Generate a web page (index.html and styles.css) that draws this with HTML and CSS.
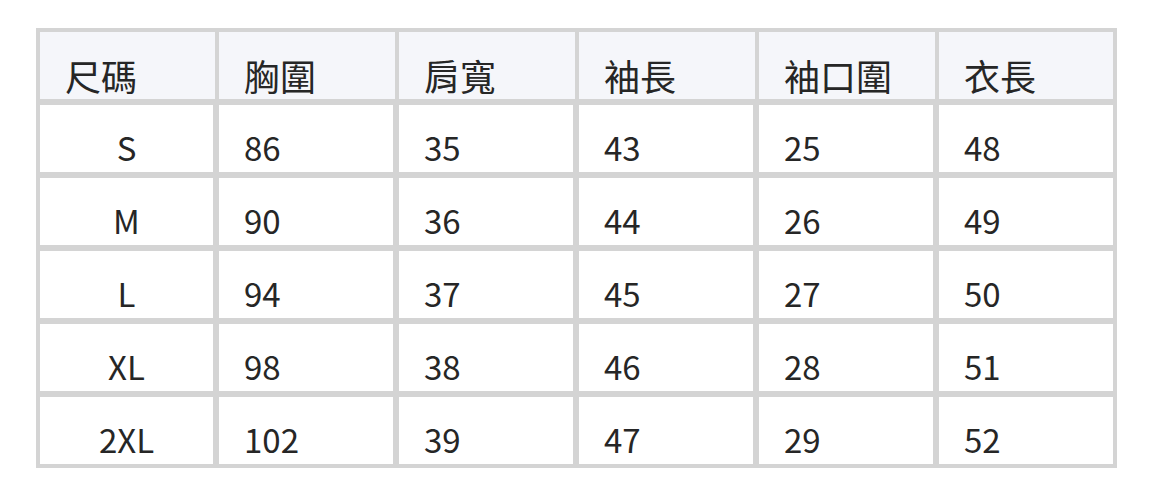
FILE: index.html
```html
<!DOCTYPE html>
<html lang="zh-Hant">
<head>
<meta charset="utf-8">
<link rel="stylesheet" href="styles.css">
</head>
<body>
<table class="size-table">
  <thead>
    <tr><th>尺碼</th><th>胸圍</th><th>肩寬</th><th>袖長</th><th>袖口圍</th><th>衣長</th></tr>
  </thead>
  <tbody>
    <tr><td class="size">S</td><td>86</td><td>35</td><td>43</td><td>25</td><td>48</td></tr>
    <tr><td class="size">M</td><td>90</td><td>36</td><td>44</td><td>26</td><td>49</td></tr>
    <tr><td class="size">L</td><td>94</td><td>37</td><td>45</td><td>27</td><td>50</td></tr>
    <tr><td class="size">XL</td><td>98</td><td>38</td><td>46</td><td>28</td><td>51</td></tr>
    <tr><td class="size">2XL</td><td>102</td><td>39</td><td>47</td><td>29</td><td>52</td></tr>
  </tbody>
</table>
</body>
</html>
```
FILE: styles.css
```css
html, body {
  margin: 0;
  padding: 0;
  background: #ffffff;
}
body {
  padding: 28px 0 0 36px;
  font-family: "Noto Sans CJK TC", "Noto Sans", sans-serif;
  color: #262626;
}
.size-table {
  border-collapse: separate;
  border-spacing: 0;
  border: 4px solid #d4d4d4;
  table-layout: fixed;
  width: 1081px;
}
.size-table th,
.size-table td {
  box-sizing: border-box;
  height: 67px;
  padding: 0 0 4px 25px;
  font-weight: 400;
  text-align: left;
  vertical-align: bottom;
  line-height: 40px;
}
.size-table th {
  font-size: 36px;
  background: #f5f6fa;
  border-right: 4px solid #d4d4d4;
  width: 180px;
}
.size-table th:first-child { width: 179px; }
.size-table th:last-child { border-right: 0; width: 174px; }
.size-table td {
  font-size: 33px;
  background: #ffffff;
  border-top: 6px solid #d4d4d4;
  border-right: 6px solid #d4d4d4;
  height: 73px;
  padding-bottom: 5px;
}
.size-table td:last-child { border-right: 0; }
.size-table td.size {
  text-align: center;
  padding-left: 0;
}
```
